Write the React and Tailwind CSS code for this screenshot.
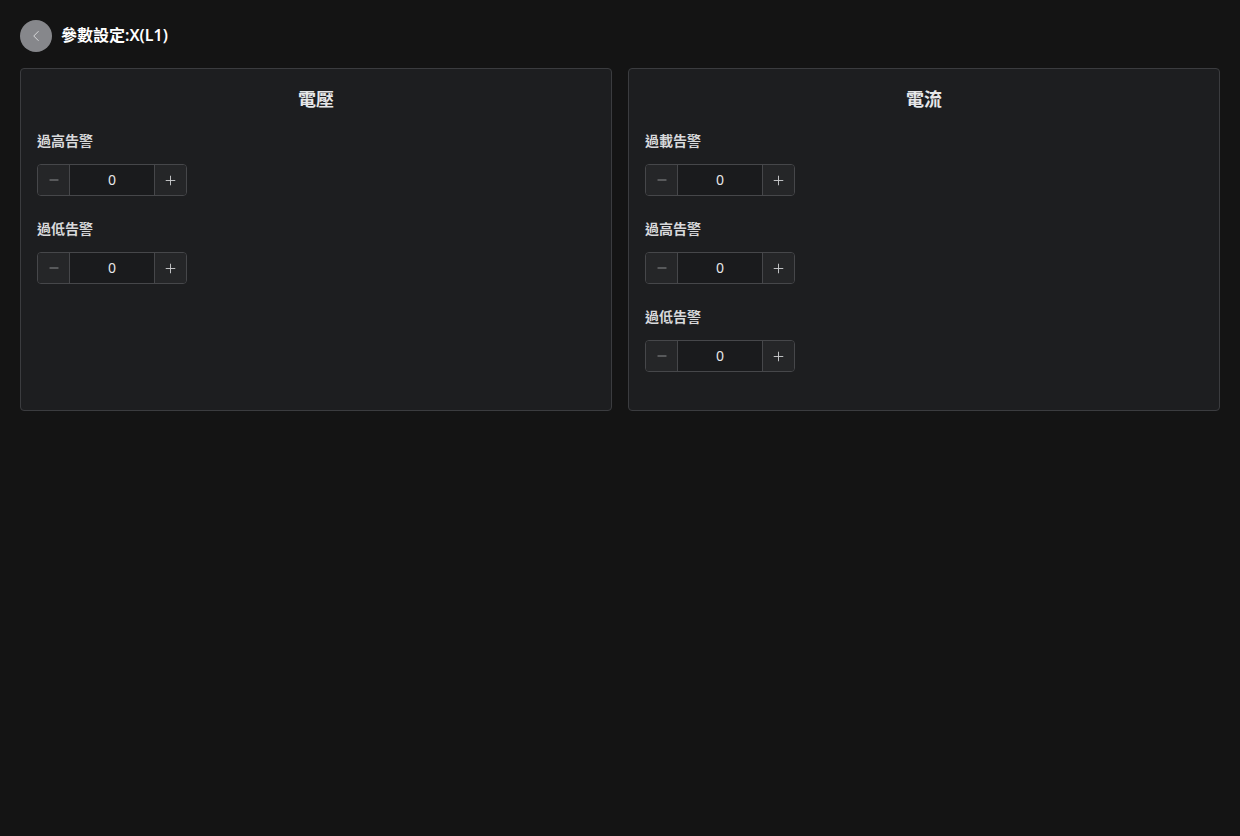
import { ChevronLeft, Minus, Plus } from "lucide-react";

const font = { fontFamily: '"Noto Sans", "Noto Sans CJK TC", sans-serif' };

function Stepper({ label }) {
  return (
    <div className="mb-[22px]">
      <div className="h-[22px] text-[14px] leading-[22px] font-semibold text-[#d8d9db]">{label}</div>
      <div className="mt-3 flex h-8 w-[150px] rounded-[4px] border border-[#46474a] overflow-hidden">
        <button className="flex w-8 items-center justify-center bg-[#252628] text-[#9a9b9e] border-r border-[#46474a]">
          <Minus className="size-[14px]" strokeWidth={1.5} />
        </button>
        <div className="flex flex-1 items-center justify-center bg-[#1a1b1d] text-[14px] leading-none text-[#e8e8ea]">0</div>
        <button className="flex w-8 items-center justify-center bg-[#252628] text-[#c9cacc] border-l border-[#46474a]">
          <Plus className="size-[15px]" strokeWidth={1.5} />
        </button>
      </div>
    </div>
  );
}

function Card({ title, items }) {
  return (
    <div className="rounded-[4px] border border-[#3b3c3f] bg-[#1d1e20] px-4 pt-4 pb-4">
      <h2 className="h-7 text-center text-[18px] leading-7 font-bold text-[#e6e7e9]">{title}</h2>
      <div className="mt-[17px]">
        {items.map((it, i) => (
          <Stepper key={i} label={it} />
        ))}
      </div>
    </div>
  );
}

export default function App() {
  return (
    <div className="min-h-screen bg-[#141414] px-5 pt-5" style={font}>
      <div className="flex items-center gap-[9px]">
        <button className="flex size-8 items-center justify-center rounded-full bg-[#86878b] text-[#dcdcde]">
          <ChevronLeft className="size-[18px]" strokeWidth={1.25} />
        </button>
        <h1 className="-mt-[3px] text-[16px] font-semibold text-white">參數設定:X(L1)</h1>
      </div>
      <div className="mt-4 grid grid-cols-2 gap-4">
        <Card title="電壓" items={["過高告警", "過低告警"]} />
        <Card title="電流" items={["過載告警", "過高告警", "過低告警"]} />
      </div>
    </div>
  );
}
